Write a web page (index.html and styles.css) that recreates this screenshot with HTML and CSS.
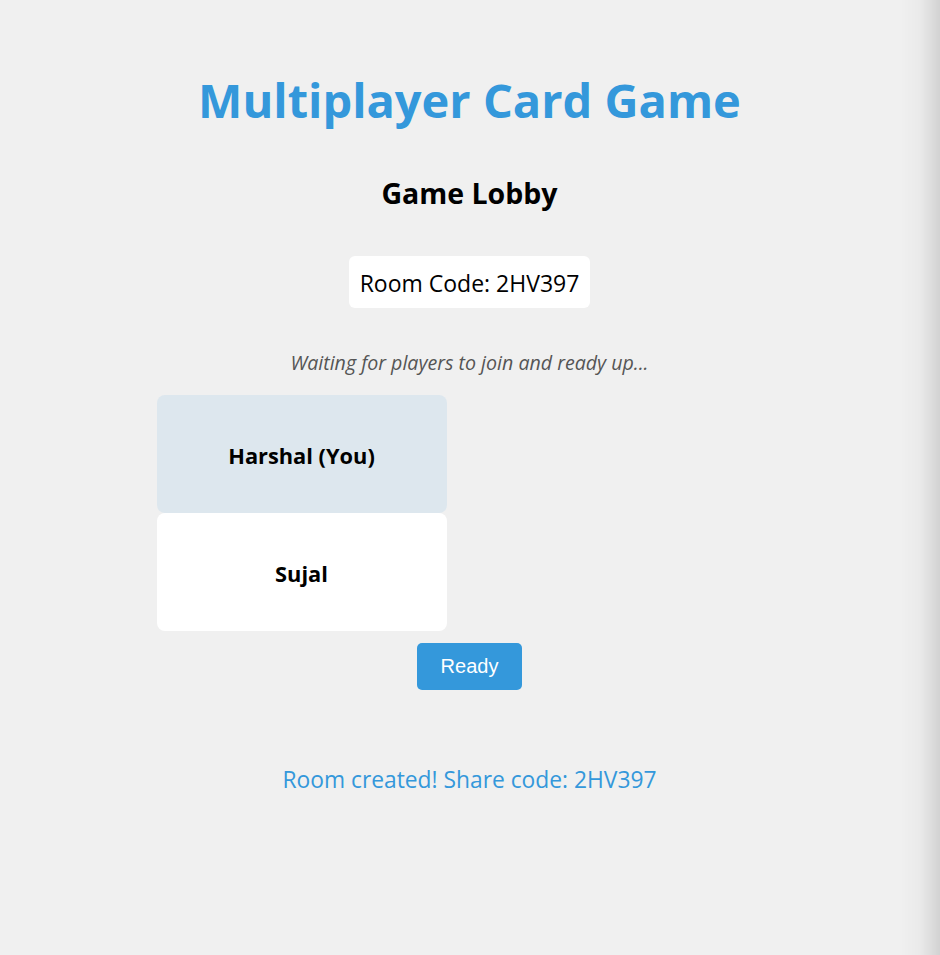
FILE: index.html
```html
<!DOCTYPE html>
<html lang="en">
<head>
<meta charset="utf-8">
<title>Multiplayer Card Game</title>
<link rel="stylesheet" href="styles.css">
</head>
<body>
<main class="app">
  <h1 class="title">Multiplayer Card Game</h1>
  <section class="lobby">
    <h2 class="lobby-title">Game Lobby</h2>
    <div class="room-code">Room Code: 2HV397</div>
    <p class="waiting">Waiting for players to join and ready up...</p>
    <div class="players">
      <div class="player player-self">Harshal (You)</div>
      <div class="player">Sujal</div>
    </div>
    <button class="ready-btn">Ready</button>
  </section>
  <p class="status">Room created! Share code: 2HV397</p>
</main>
<div class="edge-shadow"></div>
</body>
</html>
```
FILE: styles.css
```css
html, body {
  margin: 0;
  padding: 0;
  background: #f0f0f0;
}
body {
  font-family: "Open Sans", "Noto Sans", sans-serif;
  color: #000;
}
.app {
  text-align: center;
  padding-top: 70px;
  padding-right: 1px;
}
.title {
  margin: 0;
  font-size: 47px;
  line-height: 60px;
  font-weight: 700;
  color: #3498db;
}
.lobby {
  display: flex;
  flex-direction: column;
  align-items: center;
}
.lobby-title {
  margin: 45px 0 0;
  font-size: 28.5px;
  line-height: 36px;
  font-weight: 700;
}
.room-code {
  margin-top: 45px;
  background: #fff;
  border-radius: 6px;
  padding: 11px 11px 9px;
  font-size: 23px;
  line-height: 32px;
}
.waiting {
  margin: 41px 0 0;
  font-size: 19.6px;
  line-height: 28px;
  font-style: italic;
  color: #555;
}
.players {
  margin-top: 18px;
  width: 626px;
  display: grid;
  grid-template-columns: 290px;
}
.player {
  height: 118px;
  box-sizing: border-box;
  padding-top: 2px;
  display: flex;
  align-items: center;
  justify-content: center;
  background: #fff;
  border-radius: 8px;
  font-size: 21.8px;
  font-weight: 700;
}
.player-self {
  background: #dde7ee;
}
.ready-btn {
  margin-top: 12px;
  width: 105px;
  height: 47px;
  border: none;
  border-radius: 5px;
  background: #3498db;
  color: #fff;
  font-family: "Liberation Sans", Arial, sans-serif;
  font-size: 20px;
}
.status {
  margin: 75px 0 0;
  font-size: 22.8px;
  line-height: 30px;
  color: #3498db;
}
.edge-shadow {
  position: fixed;
  top: 0;
  right: 0;
  width: 40px;
  height: 100%;
  pointer-events: none;
  background: linear-gradient(to right, rgba(0,0,0,0) 0%, rgba(0,0,0,0.025) 50%, rgba(0,0,0,0.12) 100%);
}
```
